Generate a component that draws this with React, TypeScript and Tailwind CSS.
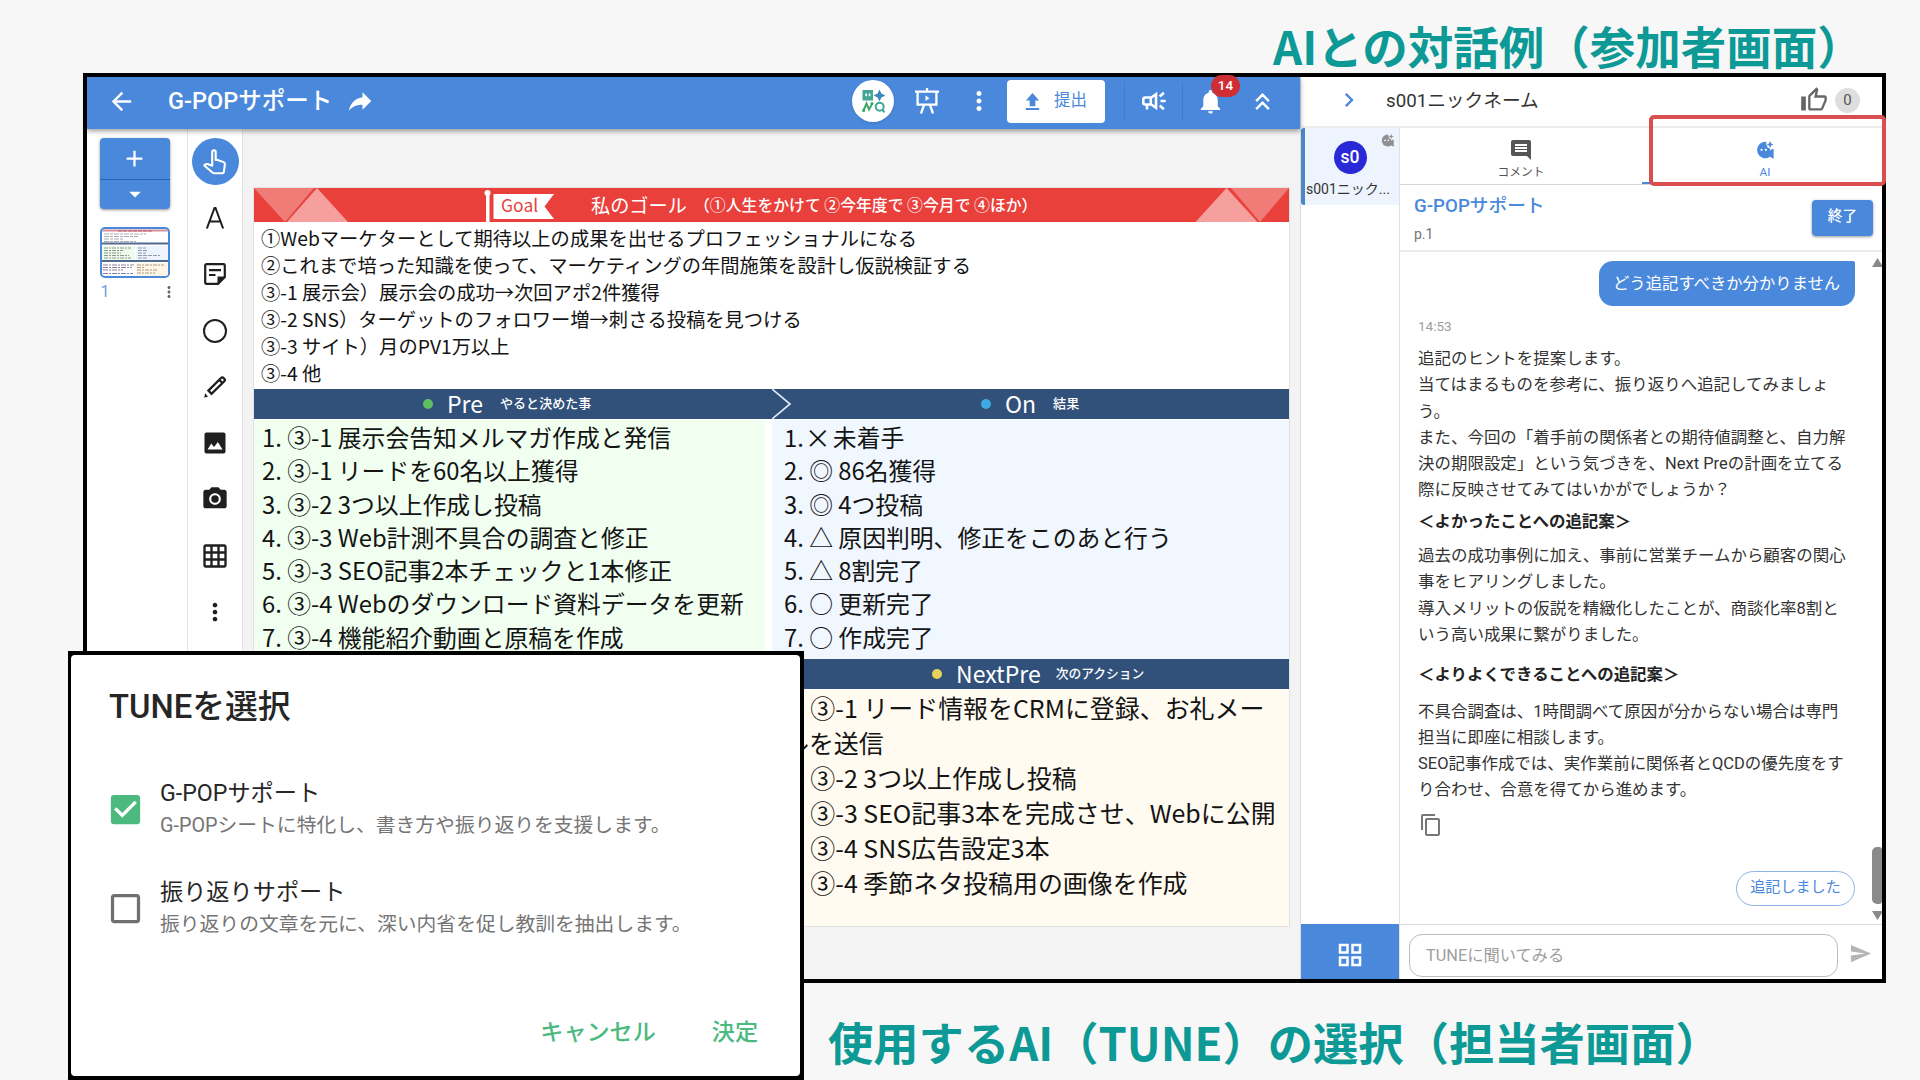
import { useState } from 'react'
import type { ReactNode } from 'react'
import {
  MdArrowBack,
  MdReply,
  MdMoreVert,
  MdNotifications,
  MdKeyboardDoubleArrowUp,
  MdChevronRight,
  MdComment,
  MdContentCopy,
  MdSend,
  MdGridView,
  MdCameraAlt,
  MdGridOn,
  MdCheckBox,
  MdCheckBoxOutlineBlank,
  MdArrowDropDown,
  MdAdd,
} from 'react-icons/md'

const goals = [
  '①Webマーケターとして期待以上の成果を出せるプロフェッショナルになる',
  '②これまで培った知識を使って、マーケティングの年間施策を設計し仮説検証する',
  '③-1 展示会）展示会の成功→次回アポ2件獲得',
  '③-2 SNS）ターゲットのフォロワー増→刺さる投稿を見つける',
  '③-3 サイト）月のPV1万以上',
  '③-4 他',
]

const pre = [
  '1. ③-1 展示会告知メルマガ作成と発信',
  '2. ③-1 リードを60名以上獲得',
  '3. ③-2 3つ以上作成し投稿',
  '4. ③-3 Web計測不具合の調査と修正',
  '5. ③-3 SEO記事2本チェックと1本修正',
  '6. ③-4 Webのダウンロード資料データを更新',
  '7. ③-4 機能紹介動画と原稿を作成',
]

const on = [
  '2. ◎ 86名獲得',
  '3. ◎ 4つ投稿',
  '4. △ 原因判明、修正をこのあと行う',
  '5. △ 8割完了',
  '6. ○ 更新完了',
  '7. ○ 作成完了',
]

const nextPre = [
  { no: '1.', text: '③-1 リード情報をCRMに登録、お礼メー' },
  { no: '', text: 'ルを送信' },
  { no: '2.', text: '③-2 3つ以上作成し投稿' },
  { no: '3.', text: '③-3 SEO記事3本を完成させ、Webに公開' },
  { no: '4.', text: '③-4 SNS広告設定3本' },
  { no: '5.', text: '③-4 季節ネタ投稿用の画像を作成' },
]

const tunes = [
  { id: 'gpop', name: 'G-POPサポート', text: 'G-POPシートに特化し、書き方や振り返りを支援します。' },
  { id: 'review', name: '振り返りサポート', text: '振り返りの文章を元に、深い内省を促し教訓を抽出します。' },
]

function AiIcon({ className }: { className?: string }) {
  return (
    <svg viewBox="0 0 24 24" className={className} fill="currentColor">
      <path d="M13.800 1.200A10.900 10.900 0 1 0 18.600 21L23.500 23.500V10.500l-2.300.2-1.400 2.400-1.500-3.200-3.300-1.500 0-2.200-1.600-1.700z" />
      <path d="M18.800 0l1.400 3.300 3.300 1.400-3.300 1.400-1.400 3.300-1.400-3.300-3.200-1.400 3.200-1.400z" />
      <circle cx="7.400" cy="11.800" r="1.500" fill="#fff" />
      <circle cx="13.200" cy="11.800" r="1.500" fill="#fff" />
    </svg>
  )
}

function AssistLogo() {
  return (
    <svg viewBox="0 0 24 24" className="h-6 w-6">
      <path d="M1.500 1h10.500v10.500H1.500z" fill="#3fa793" />
      <path d="M4.300 4.600h1.700v2.600H4.300zM7.700 4.600h1.700v2.600H7.700z" fill="#fff" />
      <path d="M18.500.5l1.900 4.100 4.100 1.900-4.100 1.900-1.900 4.100-1.900-4.100-4.100-1.900 4.100-1.900z" fill="#3f87b8" />
      <path d="M2.500 21.500l3-7 2.500 6 3.500-6.500" fill="none" stroke="#3fa76a" strokeWidth="2" />
      <circle cx="2.600" cy="21.400" r="1.600" fill="#3fa76a" />
      <circle cx="11" cy="14.600" r="1.500" fill="#3fa76a" />
      <circle cx="18.700" cy="17.800" r="4" fill="none" stroke="#3fa793" strokeWidth="2" />
      <path d="M21 20.500l2.600 2.800" stroke="#3fa793" strokeWidth="2" />
    </svg>
  )
}

function EaselIcon() {
  return (
    <svg viewBox="0 0 24 26" className="h-[26px] w-6" fill="none" stroke="currentColor" strokeWidth="2.300">
      <path d="M12 0v3M0 3.600h24M2.600 3.600v13h18.800v-13M9 17l-3 8.500M15 17l3 8.500" />
      <path d="M10.500 7.500v5.600l4-2.800z" fill="currentColor" stroke="none" />
    </svg>
  )
}

function MegaphoneIcon() {
  return (
    <svg viewBox="0 0 26 22" className="ml-[16px] h-[22px] w-[26px]" fill="none" stroke="currentColor" strokeWidth="2.600">
      <path d="M15 4.200v13.600l-4.700-3.300H4.200c-1.200 0-1.900-.7-1.900-1.900V9.400c0-1.200.7-1.900 1.900-1.900h6.100zM6 14.500v5M9.800 8v6" />
      <path d="M19.500 11h5.200M18.700 6.400l4.200-3.600M18.700 15.600l4.200 3.600" />
    </svg>
  )
}

function ToolCell({ children }: { children: ReactNode }) {
  return <div className="flex h-[56.3px] w-full items-center justify-center text-[#1f1f1f]">{children}</div>
}

function Toolbar() {
  return (
    <div className="flex w-[56px] shrink-0 flex-col items-center border-x border-[#e4e4e4] bg-white pt-[4.500px]">
      <ToolCell>
        <div className="flex h-[47px] w-[47px] items-center justify-center rounded-full bg-[#4a88db] text-white">
          <svg viewBox="0 0 24 24" className="h-[28px] w-[28px]" fill="none" stroke="currentColor" strokeWidth="1.800" strokeLinejoin="round">
            <path d="M9.600 15.200V3.400a1.500 1.500 0 0 1 3 0v6.800h1.600l5.200 1.900c.8.300 1.200 1 1.100 1.800l-.9 6.300c-.1.900-.8 1.500-1.700 1.500h-6.400c-.7 0-1.200-.2-1.700-.7L2.800 15l.8-.8c.6-.5 1.200-.6 1.900-.4z" />
          </svg>
        </div>
      </ToolCell>
      <ToolCell>
        <svg viewBox="0 0 18 22" className="h-[22px] w-[18px]" fill="none" stroke="currentColor" strokeWidth="2">
          <path d="M.9 21.500L8.500 1h1l7.600 20.500M3.600 14.600h10.800" />
        </svg>
      </ToolCell>
      <ToolCell>
        <svg viewBox="0 0 22 22" className="h-[22px] w-[22px]" fill="none" stroke="currentColor" strokeWidth="2.200">
          <path d="M2.500 1.200h17c.8 0 1.300.5 1.300 1.300v11.500l-6.800 6.800H2.500c-.8 0-1.300-.5-1.300-1.300v-17c0-.8.500-1.300 1.300-1.300zM5 7.200h12M5 12h6.500" />
          <path d="M13.500 21v-7.500H21z" fill="currentColor" stroke="none" />
        </svg>
      </ToolCell>
      <ToolCell>
        <div className="h-[24px] w-[24px] rounded-full border-2 border-[#1f1f1f]" />
      </ToolCell>
      <ToolCell>
        <svg viewBox="0 0 24 24" className="h-[24px] w-[24px]" fill="none" stroke="currentColor" strokeWidth="2.300">
          <path d="M5.400 15.600L18 3c.8-.9 1.600-.9 2.400-.1l.9.900c.8.800.8 1.600 0 2.400L8.500 18.800zM16.200 4.800L19.300 8" />
          <path d="M2.200 18.300L5 21.600 1.200 22.800z" fill="currentColor" stroke="none" />
        </svg>
      </ToolCell>
      <ToolCell>
        <svg viewBox="0 0 22 22" className="h-[22px] w-[22px]">
          <rect x=".5" y=".5" width="21" height="21" rx="2" fill="currentColor" />
          <path d="M3.500 17.500l3.800-6 2.700 3.600 2-2.600 1.800-2.500 4.800 7.500z" fill="#fff" />
        </svg>
      </ToolCell>
      <ToolCell>
        <MdCameraAlt className="h-[28px] w-[28px]" />
      </ToolCell>
      <ToolCell>
        <MdGridOn className="h-[28px] w-[28px]" />
      </ToolCell>
      <ToolCell>
        <MdMoreVert className="h-[28px] w-[28px]" />
      </ToolCell>
    </div>
  )
}

function AppBar() {
  return (
    <div className="relative z-10 flex h-[52px] shrink-0 items-center bg-[#4a88db] pb-[4px] text-white shadow-[0_2px_5px_rgba(0,0,0,0.4)]">
      <MdArrowBack className="ml-[20px] h-[29px] w-[29px]" />
      <h1 className="ml-[32px] w-[164px] text-[23.500px] leading-[30px] font-medium whitespace-nowrap">G-POPサポート</h1>
      <MdReply className="ml-[13px] h-[30px] w-[30px] -scale-x-100" />
      <div className="ml-auto flex items-center">
        <div className="flex h-[42px] w-[42px] items-center justify-center rounded-full bg-white shadow">
          <AssistLogo />
        </div>
        <div className="ml-[21px]">
          <EaselIcon />
        </div>
        <MdMoreVert className="ml-[25px] h-[30px] w-[30px]" />
        <button className="ml-[13px] flex h-[43px] w-[98px] items-center rounded-[4px] bg-white pl-[18px] text-[#4a88db]">
          <svg viewBox="0 0 14 18" className="h-[17px] w-[15px]" fill="currentColor">
            <path d="M0 16h14v2H0zM4 14V8H0l7-8 7 8h-4v6z" />
          </svg>
          <span className="ml-[14px] text-[16.500px] leading-[24px]">提出</span>
        </button>
        <div className="ml-[19px] h-[39px] w-px bg-[#3f7ccb]" />
        <MegaphoneIcon />
        <div className="ml-[15px] h-[39px] w-px bg-[#3f7ccb]" />
        <div className="relative ml-[13px]">
          <MdNotifications className="h-[29px] w-[29px]" />
          <span className="absolute -top-[12px] left-[15px] flex h-[22px] w-[29px] items-center justify-center rounded-full bg-[#cf2f33] text-[13.500px] font-medium">
            14
          </span>
        </div>
        <MdKeyboardDoubleArrowUp className="ml-[23px] mr-[23px] h-[29px] w-[29px]" />
      </div>
    </div>
  )
}

function Pages() {
  return (
    <div className="w-[100px] shrink-0 bg-white pt-[9px] pl-[12.500px]">
      <div className="flex h-[71px] w-[70px] flex-col overflow-hidden rounded-[4px] bg-[#4a88db] text-white shadow-[0_1px_3px_rgba(0,0,0,0.45)]">
        <div className="flex h-[42px] items-center justify-center border-b border-[#2564b5]">
          <MdAdd className="h-[27px] w-[27px]" />
        </div>
        <div className="flex flex-1 items-center justify-center pb-px">
          <MdArrowDropDown className="h-[28px] w-[28px]" />
        </div>
      </div>
      <div className="mt-[18px] h-[51px] w-[70px] overflow-hidden rounded-[5px] border-2 border-[#4a88db] bg-white">
        <svg viewBox="0 0 66 47" className="h-full w-full" fill="none">
          <path d="M0 1.500h66" stroke="#d58f9b" strokeWidth="2" />
          <path d="M16 2h34" stroke="#b65a68" strokeWidth="1" strokeDasharray="4 1" />
          <path d="M2 5h42M2 7.500h34M2 10h20M2 12.500h32" stroke="#a9a9b2" strokeWidth="1" strokeDasharray="5 1 3 1" />
          <path d="M0 17h33v15H0z" fill="#effced" />
          <path d="M34 17h32v15H34z" fill="#edf4fd" />
          <path d="M34 34h32v13H34z" fill="#fdf6e6" />
          <path d="M0 14.500h66M0 32h66" stroke="#51688f" strokeWidth="1.800" />
          <path d="M2 19h27M2 21.500h19M2 24h17M2 26.500h25M2 29h27" stroke="#8b9a90" strokeDasharray="4 1 2 1" />
          <path d="M36 19h8M36 21.500h9M36 24h8M36 26.500h22M36 29h9" stroke="#8d9ab0" strokeDasharray="4 1" />
          <path d="M1 36h31M1 38.500h29M1 41h20M1 44.500h30" stroke="#8e7f98" strokeDasharray="5 1 2 1" />
          <path d="M35 36h27M35 38.500h8M35 41h20M35 44h18" stroke="#b09a85" strokeDasharray="4 1 2 1" />
        </svg>
      </div>
      <div className="mt-[4px] flex w-[78px] items-center justify-between pl-px text-[16px] leading-[20px] text-[#6d9ee0]">
        1
        <MdMoreVert className="h-[20px] w-[18px] text-[#666]" />
      </div>
    </div>
  )
}

type BandProps = { dot: string; title: string; sub: string; className: string; subClassName?: string }

function Band({ dot, title, sub, className, subClassName = 'ml-[17px] text-[13.050px]' }: BandProps) {
  return (
    <div className={`flex h-[30px] items-center bg-[#31517b] text-white ${className}`}>
      <span className={`h-[10px] w-[10px] rounded-full ${dot}`} />
      <span className="ml-[14px] pb-[2px] text-[23px] leading-[28px]">{title}</span>
      <span className={`pb-[2px] leading-[20px] font-medium ${subClassName}`}>{sub}</span>
    </div>
  )
}

function Sheet() {
  return (
    <div className="h-[740px] w-[1037px] border border-[#e2e2e2] bg-white font-['Noto_Sans_CJK_JP',sans-serif] text-[#141414]">
      <div className="relative flex h-[34px] items-center bg-[#ea403c] text-white">
        <svg viewBox="0 0 1035 34" className="absolute inset-0 h-full w-full">
          <path d="M0 0h60L31 34z" fill="#f07c78" />
          <path d="M63 0l31 34H33z" fill="#f5a09d" />
          <path d="M1035 0h-58l29 34z" fill="#f07c78" />
          <path d="M972.500 0l-31 34h62z" fill="#f5a09d" />
          <circle cx="233.500" cy="5" r="3" fill="#fff" />
          <path d="M232 7h3.500v27H232zM239.500 6h60.500l-9.500 12.500 9.500 12.500h-60.500z" fill="#fff" />
        </svg>
        <span className="relative ml-[247px] w-[90px] text-[17.500px] leading-[30px] text-[#ea403c]">Goal</span>
        <span className="relative w-[103px] text-[19.200px] leading-[30px]">私のゴール</span>
        <span className="relative text-[15.850px] leading-[30px] font-medium whitespace-nowrap">
          （①人生をかけて ②今年度で ③今月で ④ほか）
        </span>
      </div>
      <div className="h-[167px] pt-[3px] pl-[7px] text-[19.300px] leading-[26.950px] whitespace-nowrap">
        {goals.map((g) => (
          <p key={g}>{g}</p>
        ))}
      </div>
      <div className="relative flex">
        <Band dot="bg-[#5fc062]" title="Pre" sub="やると決めた事" className="w-[519px] pl-[169px]" />
        <Band dot="bg-[#3fa9e6]" title="On" sub="結果" className="flex-1 pl-[208px]" />
        <svg viewBox="0 0 20 30" className="absolute top-0 left-[518px] h-[30px] w-[20px]" fill="none" stroke="#dfeaf5" strokeWidth="1.700">
          <path d="M0 0l18 15L0 30" />
        </svg>
      </div>
      <div className="flex h-[240px] pt-px text-[23.820px] leading-[33.250px] whitespace-nowrap">
        <div className="w-[511px] bg-[#f0fff0] pl-[8px]">
          {pre.map((p) => (
            <p key={p}>{p}</p>
          ))}
        </div>
        <div className="ml-[7px] flex-1 bg-[#f0f7ff] pl-[12px]">
          <p className="flex">
            1.<span className="ml-px text-[26px]">×</span>
            <span className="ml-[2px]">未着手</span>
          </p>
          {on.map((p) => (
            <p key={p}>{p}</p>
          ))}
        </div>
      </div>
      <Band
        dot="bg-[#e6d25a]"
        title="NextPre"
        sub="次のアクション"
        className="pl-[678px]"
        subClassName="ml-[15px] text-[12.750px]"
      />
      <div className="flex h-[237px] pt-px">
        <div className="w-[518px] bg-white" />
        <div className="flex-1 bg-[#fffbf0] pl-[12px] text-[24.950px] leading-[35.100px] whitespace-nowrap">
          {nextPre.map((p) => (
            <p key={p.text}>
              {p.no && <span className="inline-block w-[26.300px] tracking-[-1px]">{p.no}</span>}
              {p.text}
            </p>
          ))}
        </div>
      </div>
    </div>
  )
}

function ChatPanel() {
  return (
    <div className="flex w-[582px] shrink-0 flex-col border-l border-[#dcdcdc] bg-white">
      <div className="flex h-[51px] shrink-0 items-center border-b-2 border-[#ececec] pb-[3px]">
        <MdChevronRight className="ml-[34px] h-[28px] w-[28px] text-[#4a88db]" />
        <span className="ml-[23px] pt-px text-[18.700px] leading-[26px] text-[#333]">s001ニックネーム</span>
        <svg viewBox="0 0 24 24" className="ml-auto h-[28px] w-[28px]" fill="#666">
          <path d="M9 21h9c.83 0 1.540-.5 1.840-1.220l3.020-7.050c.09-.23.14-.47.14-.73v-2c0-1.100-.9-2-2-2h-6.310l.95-4.570.03-.32c0-.41-.17-.79-.44-1.060L14.170 1 7.580 7.590C7.220 7.950 7 8.450 7 9v10c0 1.100.9 2 2 2zM9 9l4.340-4.340L12 10h9v2l-3 7H9V9zM1 9h4v12H1V9z" />
        </svg>
        <span className="mr-[22px] ml-[7px] flex h-[25px] w-[25px] items-center justify-center rounded-full bg-[#dedede] text-[15px] text-[#555]">
          0
        </span>
      </div>
      <div className="flex min-h-0 flex-1">
        <div className="flex w-[99px] shrink-0 flex-col border-r border-[#e2e2e2]">
          <div className="relative flex h-[77px] flex-col items-center rounded-l-[3px] border-l-4 border-[#4a88cb] bg-[#eef4fd] pt-[13px]">
            <div className="mr-[4px] flex h-[33px] w-[33px] items-center justify-center rounded-full bg-[#2a29d8] text-[17.500px] font-medium text-white">s0</div>
            <span className="mt-[5px] w-full pl-px text-[14px] leading-[20px] whitespace-nowrap text-[#333]">s001ニック...</span>
            <AiIcon className="absolute top-[6px] right-[5px] h-[13px] w-[13px] text-[#8f8f8f]" />
          </div>
          <button className="mt-auto flex h-[55px] items-center justify-center bg-[#4a88db] pt-[6px] text-white">
            <MdGridView className="h-[30px] w-[30px]" />
          </button>
        </div>
        <div className="relative flex flex-1 flex-col">
          <div className="flex h-[57px] shrink-0 border-b border-[#d9d9d9] text-[11.800px] leading-[16px]">
            <button className="flex w-[242px] flex-col items-center pt-[10px] text-[#555]">
              <MdComment className="h-[24px] w-[24px]" />
              <span className="mt-[2px]">コメント</span>
            </button>
            <button className="flex flex-1 flex-col items-center border-b-2 border-[#4a88db] pt-[13px] pl-[6px] text-[#4a88db]">
              <AiIcon className="h-[18px] w-[18px]" />
              <span className="mt-[5px]">AI</span>
            </button>
          </div>
          <div className="absolute top-[-13px] right-[-4px] h-[71px] w-[237px] rounded-[5px] border-4 border-[#d94f50]" />
          <div className="flex h-[67px] shrink-0 items-start justify-between border-b-2 border-[#ececec] pr-[9px] pl-[14px]">
            <div>
              <h2 className="mt-[9px] text-[18.700px] leading-[25px] font-medium text-[#4a88db]">G-POPサポート</h2>
              <p className="mt-[5px] text-[14px] leading-[20px] text-[#757575]">p.1</p>
            </div>
            <button className="mt-[15px] h-[36px] w-[61px] rounded-[4px] bg-[#4a88db] pb-[3px] text-[14.700px] font-medium text-white shadow-[0_1px_3px_rgba(0,0,0,0.4)]">
              終了
            </button>
          </div>
          <div className="flex min-h-0 flex-1">
            <div className="flex flex-1 flex-col pt-[9px] pr-[15px] pl-[18px] text-[16.480px] leading-[26.300px] whitespace-nowrap text-[#333]">
              <div className="h-[45px] w-[256px] self-end rounded-[14px] rounded-tr-[2px] bg-[#4a88db] pt-[10px] pl-[14px] text-[16.350px] text-white">
                どう追記すべきか分かりません
              </div>
              <span className="mt-[10px] text-[13.500px] leading-[20px] text-[#9e9e9e]">14:53</span>
              <p className="mt-[10px]">
                追記のヒントを提案します。
                <br />
                当てはまるものを参考に、振り返りへ追記してみましょ
                <br />
                う。
                <br />
                また、今回の「着手前の関係者との期待値調整と、自力解
                <br />
                決の期限設定」という気づきを、Next Preの計画を立てる
                <br />
                際に反映させてみてはいかがでしょうか？
              </p>
              <p className="mt-[5px] font-bold text-[#222]">＜よかったことへの追記案＞</p>
              <p className="mt-[8px]">
                過去の成功事例に加え、事前に営業チームから顧客の関心
                <br />
                事をヒアリングしました。
                <br />
                導入メリットの仮説を精緻化したことが、商談化率8割と
                <br />
                いう高い成果に繋がりました。
              </p>
              <p className="mt-[14px] font-bold text-[#222]">＜よりよくできることへの追記案＞</p>
              <p className="mt-[10px]">
                不具合調査は、1時間調べて原因が分からない場合は専門
                <br />
                担当に即座に相談します。
                <br />
                SEO記事作成では、実作業前に関係者とQCDの優先度をす
                <br />
                り合わせ、合意を得てから進めます。
              </p>
              <MdContentCopy className="mt-[9px] ml-px h-[24px] w-[24px] text-[#777]" />
              <button className="mt-[34px] h-[35px] w-[119px] self-end rounded-full border border-[#8fb3e6] pb-[2px] text-[15.100px] leading-[24px] text-[#4a88db]">
                追記しました
              </button>
            </div>
            <div className="flex w-[12px] flex-col items-end overflow-hidden pt-[6px]">
              <svg viewBox="0 0 11 9" className="mr-[-1px] h-[9px] w-[11px] shrink-0" fill="#8a8a8a">
                <path d="M5.500 0L11 9H0z" />
              </svg>
              <div className="mt-[580px] h-[57px] w-[10px] rounded-l-[5px] rounded-r-[3px] bg-[#8a8a8a]" />
              <svg viewBox="0 0 11 9" className="mt-[7px] mr-[-1px] h-[9px] w-[11px] shrink-0" fill="#8a8a8a">
                <path d="M0 0h11L5.500 9z" />
              </svg>
            </div>
          </div>
          <div className="flex h-[55px] shrink-0 items-start border-t border-[#dcdcdc] pt-[9px] pl-[9px]">
            <div className="h-[43px] w-[429px] rounded-[13px] border border-[#bdbdbd] pt-[8px] pl-[16px] text-[16.300px] leading-[26px] text-[#9e9e9e]">
              TUNEに聞いてみる
            </div>
            <MdSend className="mt-[8px] ml-[11px] h-[23px] w-[23px] text-[#b5b5b5]" />
          </div>
        </div>
      </div>
    </div>
  )
}

function TuneDialog() {
  const [selected, setSelected] = useState('gpop')

  return (
    <div className="absolute top-[651px] left-[68px] h-[429px] w-[736px] bg-black p-[4px] pl-[3px]">
      <div className="flex h-full flex-col rounded-[4px] bg-white pr-[42px] pl-[39px]">
        <h2 className="mt-[31px] ml-[-1px] text-[32.800px] leading-[42px] font-medium text-[#262626]">TUNEを選択</h2>
        <div className="mt-[49px] flex flex-col gap-[36px]">
          {tunes.map((t) => (
            <button key={t.id} className="flex h-[63px] items-center text-left" onClick={() => setSelected(t.id)}>
              {selected === t.id ? (
                <MdCheckBox className="ml-[-4px] mt-[2px] h-[39px] w-[39px] text-[#4cb97f]" />
              ) : (
                <MdCheckBoxOutlineBlank className="ml-[-4px] mt-[2px] h-[39px] w-[39px] text-[#707070]" />
              )}
              <span className="ml-[15px] flex flex-col whitespace-nowrap">
                <span className="text-[23.200px] leading-[32px] text-[#262626]">{t.name}</span>
                <span className="mt-px text-[19.800px] leading-[31px] text-[#757575]">{t.text}</span>
              </span>
            </button>
          ))}
        </div>
        <div className="mt-auto mb-[27px] flex justify-end gap-[56px] text-[23.100px] leading-[32px] font-medium text-[#4cb97f]">
          <button>キャンセル</button>
          <button>決定</button>
        </div>
      </div>
    </div>
  )
}

export default function App() {
  return (
    <div className="relative h-[1080px] w-[1920px] overflow-hidden bg-[#f7f7f7] font-['Roboto','Noto_Sans_CJK_JP',sans-serif]">
      <div className="flex h-[73px] items-start pt-[14px] pl-[1273px] font-['Noto_Sans_CJK_JP',sans-serif] text-[45.500px] leading-[62px] font-bold whitespace-nowrap text-[#0d9996]">
        AIとの対話例（参加者画面）
      </div>
      <div className="ml-[83px] flex h-[910px] w-[1803px] border-4 border-black">
        <div className="flex min-w-0 flex-1 flex-col">
          <AppBar />
          <div className="flex min-h-0 flex-1">
            <Pages />
            <Toolbar />
            <div className="flex-1 bg-[#f3f3f3] pt-[58px] pl-[10px]">
              <Sheet />
            </div>
          </div>
        </div>
        <ChatPanel />
      </div>
      <div className="flex pt-[27px] pl-[828px] font-['Noto_Sans_CJK_JP',sans-serif] text-[45.300px] leading-[62px] font-bold whitespace-nowrap text-[#0d9996]">
        使用するAI（TUNE）の選択（担当者画面）
      </div>
      <TuneDialog />
    </div>
  )
}
